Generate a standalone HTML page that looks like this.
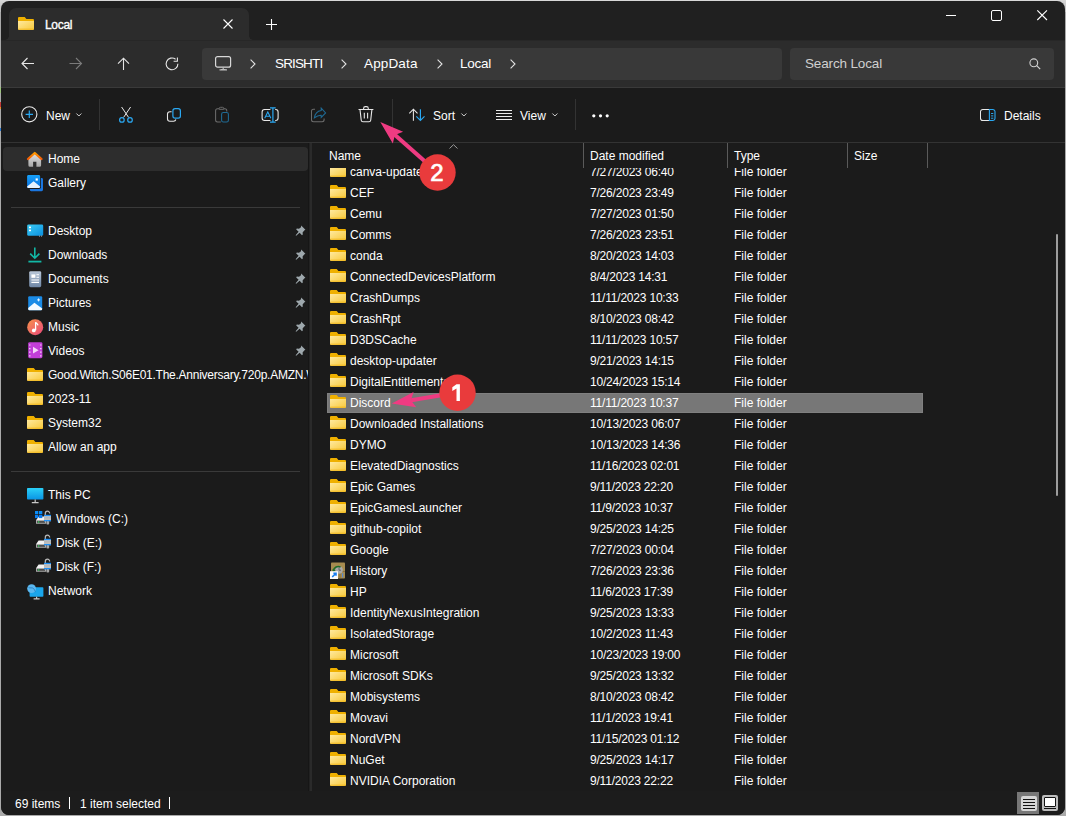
<!DOCTYPE html>
<html><head><meta charset="utf-8"><style>
*{box-sizing:border-box;margin:0;padding:0}
html,body{width:1066px;height:816px;overflow:hidden;font-family:"Liberation Sans",sans-serif;color:#fff;font-size:12px}
body{background:#aaaaaa;position:relative}
.a{position:absolute}
#win{position:absolute;left:1px;top:1px;width:1064px;height:814px;background:#202020;border-radius:8px;overflow:hidden}
#c{position:absolute;left:-1px;top:-1px;width:1066px;height:816px}
.t{position:absolute;white-space:nowrap;line-height:14px;height:14px}
svg{position:absolute;overflow:visible}
.row{position:absolute;left:0;height:21px;width:1000px}
.row .n{position:absolute;left:350px;top:3px;line-height:14px;white-space:nowrap}
.row .d{position:absolute;left:590px;top:3px;line-height:14px;white-space:nowrap;letter-spacing:-0.2px}
.row .y{position:absolute;left:734px;top:3px;line-height:14px;white-space:nowrap}
.row svg{left:330px;top:2px}
.si{position:absolute;left:0;height:24px;width:309px}
.si .t{left:48px;top:5px}
.si svg{left:27px;top:4px}
.pin{left:293px !important;top:6px !important}
</style></head><body>
<div style="position:absolute;left:0;top:0;width:1066px;height:1px;background:#d8d8d8"></div><div style="position:absolute;left:0;top:0;width:10px;height:12px;background:linear-gradient(#d8d8d8,#b8b8b8)"></div><div style="position:absolute;left:1056px;top:0;width:10px;height:12px;background:linear-gradient(#d8d8d8,#c0c0c0)"></div>
<div id="win"><div id="c">
<div class="a" style="left:9px;top:8px;width:240px;height:33px;background:#2c2c2c;border-radius:7px 7px 0 0"></div>
<div class="a" style="left:249px;top:36px;width:4px;height:4px;background:radial-gradient(circle at 100% 0,#202020 3.5px,#2c2c2c 4px)"></div>
<div class="a" style="left:5px;top:36px;width:4px;height:4px;background:radial-gradient(circle at 0 0,#202020 3.5px,#2c2c2c 4px)"></div>
<svg width="16" height="13" viewBox="0 0 16 13" style="left:18px;top:17px"><defs><linearGradient id="fg1" x1="0" y1="0" x2="1" y2="1"><stop offset="0" stop-color="#ffe99e"/><stop offset="1" stop-color="#f8c93a"/></linearGradient></defs><path d="M1.1 0h5.6l1.7 2h6.5a1.1 1.1 0 0 1 1.1 1.1V6H0V1.1A1.1 1.1 0 0 1 1.1 0z" fill="#efb000"/><path d="M0 4h16v7.8a1.2 1.2 0 0 1-1.2 1.2H1.2A1.2 1.2 0 0 1 0 11.8z" fill="url(#fg1)"/><path d="M0.4 12.2h15.2" stroke="#f1b41a" stroke-width="0.9"/></svg>
<div class="t" style="left:45px;top:18px;letter-spacing:-0.3px;-webkit-text-stroke:0.35px #fff">Local</div>
<svg width="10" height="10" style="left:223px;top:19px"><path d="M0.5 0.5L9.5 9.5M9.5 0.5L0.5 9.5" stroke="#fff" stroke-width="1.1"/></svg>
<svg width="12" height="12" style="left:266px;top:19px"><path d="M5.5 0V11M0 5.5H11" stroke="#fff" stroke-width="1.1"/></svg>
<svg width="11" height="2" style="left:946px;top:14px"><path d="M0 1.5H10" stroke="#fff" stroke-width="1"/></svg>
<svg width="11" height="11" style="left:991px;top:10px"><rect x="0.5" y="0.5" width="10" height="10" rx="1.5" fill="none" stroke="#fff" stroke-width="1"/></svg>
<svg width="11" height="11" style="left:1037px;top:10px"><path d="M0.3 0.3L10 10M10 0.3L0.3 10" stroke="#fff" stroke-width="1.1"/></svg>
<div class="a" style="left:0;top:40px;width:1066px;height:47px;background:#2c2c2c"></div>
<div class="a" style="left:0;top:87px;width:1066px;height:1px;background:#3a3a3a"></div>
<div class="a" style="left:0;top:40px;width:1066px;height:1px;background:#272727"></div>
<svg width="14" height="14" style="left:21px;top:57px"><path d="M1 6.5H13M6.5 1L1 6.5L6.5 12" fill="none" stroke="#e6e6e6" stroke-width="1.1"/></svg>
<svg width="14" height="14" style="left:69px;top:57px"><path d="M0.5 6.5H12.5M7 1L12.5 6.5L7 12" fill="none" stroke="#7a7a7a" stroke-width="1.1"/></svg>
<svg width="14" height="14" style="left:117px;top:57px"><path d="M6.5 13V1.2M1 6.7L6.5 1.2L12 6.7" fill="none" stroke="#e6e6e6" stroke-width="1.1"/></svg>
<svg width="14" height="14" style="left:165px;top:57px"><path d="M12.9 6.8A5.9 5.9 0 1 1 10.6 2.2" fill="none" stroke="#e6e6e6" stroke-width="1.1"/><path d="M12.4 0.6V4.3H8.6" fill="none" stroke="#e6e6e6" stroke-width="1.1"/></svg>
<div class="a" style="left:202px;top:48px;width:580px;height:32px;background:#393939;border-radius:4px"></div>
<svg width="17" height="15" style="left:215px;top:56px"><rect x="0.6" y="0.6" width="15" height="10.6" rx="2" fill="none" stroke="#d8d8d8" stroke-width="1.2"/><path d="M6 13.6H10.5M8.2 11.3V13.6M4.5 13.8H12" stroke="#bdbdbd" stroke-width="1.2"/></svg>
<svg width="6" height="10" style="left:250px;top:59px"><path d="M0.6 0.6L5 5L0.6 9.4" fill="none" stroke="#e0e0e0" stroke-width="1.1"/></svg>
<svg width="6" height="10" style="left:341px;top:59px"><path d="M0.6 0.6L5 5L0.6 9.4" fill="none" stroke="#e0e0e0" stroke-width="1.1"/></svg>
<svg width="6" height="10" style="left:437px;top:59px"><path d="M0.6 0.6L5 5L0.6 9.4" fill="none" stroke="#e0e0e0" stroke-width="1.1"/></svg>
<svg width="6" height="10" style="left:510px;top:59px"><path d="M0.6 0.6L5 5L0.6 9.4" fill="none" stroke="#e0e0e0" stroke-width="1.1"/></svg>
<div class="t" style="left:275px;top:56px;font-size:13.5px;line-height:15px;height:15px;letter-spacing:-0.85px">SRISHTI</div>
<div class="t" style="left:364px;top:56px;font-size:13.5px;line-height:15px;height:15px;letter-spacing:0.15px">AppData</div>
<div class="t" style="left:460px;top:56px;font-size:13.5px;line-height:15px;height:15px;letter-spacing:-0.25px">Local</div>
<div class="a" style="left:790px;top:48px;width:264px;height:32px;background:#393939;border-radius:4px"></div>
<div class="t" style="left:805px;top:56px;font-size:13.5px;line-height:15px;height:15px;letter-spacing:-0.15px;color:#d0d0d0">Search Local</div>
<svg width="12" height="12" style="left:1029px;top:58px"><circle cx="4.8" cy="4.8" r="3.9" fill="none" stroke="#d0d0d0" stroke-width="1.1"/><path d="M7.7 7.7L11.2 11.2" stroke="#d0d0d0" stroke-width="1.2"/></svg>
<div class="a" style="left:0;top:88px;width:1066px;height:54px;background:#1b1b1b"></div>
<div class="a" style="left:0;top:142px;width:1066px;height:1px;background:#333"></div>
<svg width="17" height="17" style="left:21px;top:106px"><circle cx="8.3" cy="8.3" r="7.6" fill="none" stroke="#e8e8e8" stroke-width="1.1"/><path d="M8.3 4.6V12M4.6 8.3H12" stroke="#2aa8f2" stroke-width="1.2"/></svg>
<div class="t" style="left:46px;top:109px">New</div>
<svg width="6" height="4" style="left:76px;top:113px"><path d="M0.4 0.5L2.9 3L5.4 0.5" fill="none" stroke="#cfcfcf" stroke-width="1"/></svg>
<div class="a" style="left:99px;top:99px;width:1px;height:31px;background:#333"></div>
<svg width="1066" height="200" style="left:0;top:0"><path d="M121.6 107L128.6 117.4M130.6 107L123.6 117.4" stroke="#e8e8e8" stroke-width="1" fill="none"/><circle cx="121.9" cy="119.9" r="2.3" fill="none" stroke="#2aa8f2" stroke-width="1.2"/><circle cx="130" cy="119.9" r="2.3" fill="none" stroke="#2aa8f2" stroke-width="1.2"/><path d="M171.6 111.7H169.9a2.4 2.4 0 0 0-2.4 2.4v4.7a2.4 2.4 0 0 0 2.4 2.4h3.7a2.4 2.4 0 0 0 2.3-1.7" fill="none" stroke="#e8e8e8" stroke-width="1.1"/><rect x="172.9" y="108.7" width="7.5" height="9.5" rx="2.2" fill="none" stroke="#2aa8f2" stroke-width="1.2"/><path d="M219 108.7H217.6a2 2 0 0 0-2 2V120a2 2 0 0 0 2 2h3.2M223.8 108.7h1a2 2 0 0 1 2 2v0.8" fill="none" stroke="#6c6c6c" stroke-width="1.05"/><path d="M219.2 109.3V108.6a1.3 1.3 0 0 1 1.3-1.3h2a1.3 1.3 0 0 1 1.3 1.3v0.7Z" fill="none" stroke="#6c6c6c" stroke-width="1"/><rect x="221.6" y="112.5" width="6.8" height="9.5" rx="1.8" fill="none" stroke="#1f6a94" stroke-width="1.1"/><path d="M270.4 109.5H264.6a2.5 2.5 0 0 0-2.5 2.5V118a2.5 2.5 0 0 0 2.5 2.5H270.4M275.2 109.5h0.4a2.5 2.5 0 0 1 2.5 2.5V118a2.5 2.5 0 0 1-2.5 2.5h-0.4" fill="none" stroke="#e8e8e8" stroke-width="1.1"/><path d="M272.9 107.3V122.7M270 107.8H275.7M270 122.2H275.7" fill="none" stroke="#2aa8f2" stroke-width="1.2"/><path d="M264.7 118.3L267.8 111.9L270.9 118.3M265.7 116.3H269.9" fill="none" stroke="#2aa8f2" stroke-width="1.05"/><path d="M315 109.3H313.5a2 2 0 0 0-2 2v8.5a2 2 0 0 0 2 2h8.6a2 2 0 0 0 2-2v-1.4" fill="none" stroke="#6c6c6c" stroke-width="1.05"/><path d="M321.2 108.2L325.6 112.9L321.2 117.4V115.2C318.4 115 316.4 116.2 314.4 117.8C315 113.6 317.6 111.2 321.2 110.6Z" fill="none" stroke="#1f6a94" stroke-width="1.05"/></svg>
<svg width="16" height="17" style="left:358px;top:106px"><path d="M0.5 3.5H15.4M5.6 3.4V2.4a1.8 1.8 0 0 1 1.8-1.8h1.1a1.8 1.8 0 0 1 1.8 1.8v1M2 3.6L3.2 14.2a1.8 1.8 0 0 0 1.8 1.6h5.9a1.8 1.8 0 0 0 1.8-1.6L13.9 3.6M6.3 6.8V12.4M9.6 6.8V12.4" fill="none" stroke="#e8e8e8" stroke-width="1.1"/></svg>
<div class="a" style="left:392px;top:99px;width:1px;height:31px;background:#333"></div>
<svg width="26" height="26" style="left:404px;top:102px"><path d="M9.4 7V18.8M5.3 11.4L9.4 7.2L13.5 11.4" fill="none" stroke="#e8e8e8" stroke-width="1.05"/><path d="M16.4 7.2V18.6M12.3 14.4L16.4 18.5L20.5 14.4" fill="none" stroke="#2aa8f2" stroke-width="1.15"/></svg>
<div class="t" style="left:433px;top:109px">Sort</div>
<svg width="6" height="4" style="left:461px;top:113px"><path d="M0.4 0.5L2.9 3L5.4 0.5" fill="none" stroke="#cfcfcf" stroke-width="1"/></svg>
<svg width="17" height="14" style="left:496px;top:108px"><path d="M0 2.5H16M0 5.5H16M0 8.5H16M0 11.5H16" stroke="#ececec" stroke-width="1"/></svg>
<div class="t" style="left:520px;top:109px">View</div>
<svg width="6" height="4" style="left:552px;top:113px"><path d="M0.4 0.5L2.9 3L5.4 0.5" fill="none" stroke="#cfcfcf" stroke-width="1"/></svg>
<div class="a" style="left:575px;top:99px;width:1px;height:31px;background:#333"></div>
<svg width="18" height="4" style="left:592px;top:114px"><circle cx="1.8" cy="1.8" r="1.6" fill="#fff"/><circle cx="8.5" cy="1.8" r="1.6" fill="#fff"/><circle cx="15.2" cy="1.8" r="1.6" fill="#fff"/></svg>
<svg width="17" height="13" style="left:980px;top:109px"><path d="M9.4 0.5H2.8a2.3 2.3 0 0 0-2.3 2.3V9.2a2.3 2.3 0 0 0 2.3 2.3H9.4" fill="none" stroke="#e8e8e8" stroke-width="1.05"/><path d="M9.4 0.5h3.3a2.3 2.3 0 0 1 2.3 2.3V9.2a2.3 2.3 0 0 1-2.3 2.3H9.4z" fill="none" stroke="#2aa8f2" stroke-width="1.1"/><path d="M11.1 4.5H13.3M11.1 6.9H13.3M11.1 9.2H13.3" stroke="#2aa8f2" stroke-width="1"/></svg>
<div class="t" style="left:1004px;top:109px">Details</div>
<div class="a" style="left:0;top:143px;width:1066px;height:648px;background:#1b1b1b"></div>
<div class="a" style="left:3px;top:147px;width:305px;height:24px;background:#2d2d2d;border-radius:4px"></div>
<div class="a" style="left:308px;top:143px;width:1px;height:648px;background:#161616"></div>
<div class="a" style="left:309px;top:143px;width:1px;height:648px;background:#222"></div><div class="a" style="left:310px;top:143px;width:2px;height:648px;background:#2a2a2a"></div>
<div class="a" style="left:11px;top:207px;width:289px;height:1px;background:#3a3a3a"></div>
<div class="a" style="left:11px;top:471px;width:289px;height:1px;background:#3a3a3a"></div>
<svg width="17" height="17" style="left:27px;top:151px"><defs><linearGradient id="hg" x1="0" y1="0" x2="0" y2="1"><stop offset="0" stop-color="#e2e2e2"/><stop offset="1" stop-color="#a6a6a6"/></linearGradient><linearGradient id="rg" x1="0" y1="0" x2="0" y2="1"><stop offset="0" stop-color="#ff9a00"/><stop offset="1" stop-color="#f25a06"/></linearGradient></defs><path d="M1.4 7.6L7.75 2.2L14.1 7.6V14.3a1.5 1.5 0 0 1-1.5 1.5H9.4V10.8H6.1V15.8H2.9a1.5 1.5 0 0 1-1.5-1.5Z" fill="url(#hg)"/><path d="M1 8L7.75 2L14.5 8" fill="none" stroke="url(#rg)" stroke-width="2.3" stroke-linecap="round" stroke-linejoin="round"/></svg>
<div class="t" style="left:48px;top:152px">Home</div>
<svg width="17" height="17" style="left:27px;top:175px"><defs><linearGradient id="gg" x1="0" y1="0" x2="0" y2="1"><stop offset="0" stop-color="#16a0f8"/><stop offset="1" stop-color="#0a70e2"/></linearGradient></defs><rect x="2.8" y="3" width="13.2" height="13.2" rx="1.4" fill="#1a76e0"/><rect x="-0.5" y="-0.3" width="14.4" height="14.4" rx="1.8" fill="#1b1b1b"/><rect x="0.1" y="0.1" width="13" height="13" rx="1.4" fill="url(#gg)"/><path d="M0.1 11.4L6.6 6.2L13.1 11.6V11.7a1.4 1.4 0 0 1-1.4 1.4H1.5A1.4 1.4 0 0 1 0.1 11.7Z" fill="#e4f2ff"/><rect x="8.6" y="3.4" width="2.2" height="2.2" fill="#fff"/></svg>
<div class="t" style="left:48px;top:176px">Gallery</div>
<svg width="17" height="13" style="left:27px;top:224px"><defs><linearGradient id="dg" x1="0" y1="0" x2="1" y2="1"><stop offset="0" stop-color="#3ccdf5"/><stop offset="1" stop-color="#0a8fe0"/></linearGradient></defs><rect x="0.2" y="0.4" width="16" height="11.4" rx="1.4" fill="url(#dg)"/><rect x="2" y="2.6" width="2" height="1.6" fill="#fff"/><rect x="2" y="5.6" width="2" height="1.6" fill="#fff"/><rect x="12" y="11.6" width="1" height="1" fill="#aaa"/><rect x="14" y="11.6" width="1" height="1" fill="#aaa"/></svg>
<div class="t" style="left:48px;top:224px">Desktop</div>
<svg width="11" height="11" style="left:294.5px;top:225px"><path d="M6.2 0.6L10.4 4.8L9.2 5.4L7.6 7.4L7.8 9.6L7 10.2L4.6 7.8L1.2 10.8L0.6 10.2L3.6 6.8L1.2 4.4L1.8 3.6L4 3.8L6 2.2Z" fill="#9ea8ad"/></svg>
<svg width="14" height="16" style="left:28px;top:247px"><path d="M6.8 0.6V11M2.2 6.6L6.8 11.2L11.4 6.6" fill="none" stroke="#12b7a5" stroke-width="1.6"/><path d="M0.4 14.6H13.4" stroke="#12b7a5" stroke-width="1.8"/></svg>
<div class="t" style="left:48px;top:248px">Downloads</div>
<svg width="11" height="11" style="left:294.5px;top:249px"><path d="M6.2 0.6L10.4 4.8L9.2 5.4L7.6 7.4L7.8 9.6L7 10.2L4.6 7.8L1.2 10.8L0.6 10.2L3.6 6.8L1.2 4.4L1.8 3.6L4 3.8L6 2.2Z" fill="#9ea8ad"/></svg>
<svg width="13" height="17" style="left:29px;top:271px"><defs><linearGradient id="docg" x1="0" y1="0" x2="0" y2="1"><stop offset="0" stop-color="#b9c7d8"/><stop offset="1" stop-color="#6f87a6"/></linearGradient></defs><rect x="0.2" y="0.2" width="12" height="16" rx="1.4" fill="url(#docg)"/><rect x="2.4" y="3.4" width="4" height="3.4" fill="#fff"/><path d="M7.4 3.8H10M7.4 6.2H10M2.4 9H10M2.4 11.4H10" stroke="#fff" stroke-width="1.1"/></svg>
<div class="t" style="left:48px;top:272px">Documents</div>
<svg width="11" height="11" style="left:294.5px;top:273px"><path d="M6.2 0.6L10.4 4.8L9.2 5.4L7.6 7.4L7.8 9.6L7 10.2L4.6 7.8L1.2 10.8L0.6 10.2L3.6 6.8L1.2 4.4L1.8 3.6L4 3.8L6 2.2Z" fill="#9ea8ad"/></svg>
<svg width="15" height="15" style="left:28px;top:296px"><rect x="0.2" y="0.2" width="14" height="14" rx="1.2" fill="#1b8be6"/><path d="M0.2 12L6.4 6.8L14.2 12.4V13a1.2 1.2 0 0 1-1.2 1.2H1.4A1.2 1.2 0 0 1 0.2 13Z" fill="#f4faff"/><path d="M10.6 2.4V5.4M9.1 3.9H12.1" stroke="#fff" stroke-width="0.9"/></svg>
<div class="t" style="left:48px;top:296px">Pictures</div>
<svg width="11" height="11" style="left:294.5px;top:297px"><path d="M6.2 0.6L10.4 4.8L9.2 5.4L7.6 7.4L7.8 9.6L7 10.2L4.6 7.8L1.2 10.8L0.6 10.2L3.6 6.8L1.2 4.4L1.8 3.6L4 3.8L6 2.2Z" fill="#9ea8ad"/></svg>
<svg width="17" height="17" style="left:27px;top:319px"><defs><linearGradient id="mg" x1="0" y1="0" x2="1" y2="1"><stop offset="0" stop-color="#f7934a"/><stop offset="1" stop-color="#e8477a"/></linearGradient></defs><circle cx="8.2" cy="8.2" r="8" fill="url(#mg)"/><path d="M8.6 3.2V11.2" stroke="#fff" stroke-width="1.3"/><circle cx="6.8" cy="11.4" r="1.9" fill="#fff"/><path d="M8.6 3.2C9.4 4.6 10.8 4.8 11 6.4" fill="none" stroke="#fff" stroke-width="1.2"/></svg>
<div class="t" style="left:48px;top:320px">Music</div>
<svg width="11" height="11" style="left:294.5px;top:321px"><path d="M6.2 0.6L10.4 4.8L9.2 5.4L7.6 7.4L7.8 9.6L7 10.2L4.6 7.8L1.2 10.8L0.6 10.2L3.6 6.8L1.2 4.4L1.8 3.6L4 3.8L6 2.2Z" fill="#9ea8ad"/></svg>
<svg width="15" height="17" style="left:28px;top:342px"><rect x="0.2" y="0.2" width="14.2" height="16" rx="1.4" fill="#c23ed8"/><path d="M5 4.8L10.6 8.2L5 11.6Z" fill="#f3d6f8"/><path d="M1.8 2.4v1.2M1.8 6v1.2M1.8 9.6v1.2M1.8 13.2v1.2M12.8 2.4v1.2M12.8 6v1.2M12.8 9.6v1.2M12.8 13.2v1.2" stroke="#f3d6f8" stroke-width="1.4"/></svg>
<div class="t" style="left:48px;top:344px">Videos</div>
<svg width="11" height="11" style="left:294.5px;top:345px"><path d="M6.2 0.6L10.4 4.8L9.2 5.4L7.6 7.4L7.8 9.6L7 10.2L4.6 7.8L1.2 10.8L0.6 10.2L3.6 6.8L1.2 4.4L1.8 3.6L4 3.8L6 2.2Z" fill="#9ea8ad"/></svg>
<svg width="16" height="13" viewBox="0 0 16 13" style="left:27px;top:368px"><defs><linearGradient id="fg2" x1="0" y1="0" x2="1" y2="1"><stop offset="0" stop-color="#ffe99e"/><stop offset="1" stop-color="#f8c93a"/></linearGradient></defs><path d="M1.1 0h5.6l1.7 2h6.5a1.1 1.1 0 0 1 1.1 1.1V6H0V1.1A1.1 1.1 0 0 1 1.1 0z" fill="#efb000"/><path d="M0 4h16v7.8a1.2 1.2 0 0 1-1.2 1.2H1.2A1.2 1.2 0 0 1 0 11.8z" fill="url(#fg2)"/><path d="M0.4 12.2h15.2" stroke="#f1b41a" stroke-width="0.9"/></svg>
<div class="t" style="left:48px;top:368px;width:260px;overflow:hidden;letter-spacing:-0.25px">Good.Witch.S06E01.The.Anniversary.720p.AMZN.WEB</div>
<svg width="16" height="13" viewBox="0 0 16 13" style="left:27px;top:392px"><defs><linearGradient id="fg3" x1="0" y1="0" x2="1" y2="1"><stop offset="0" stop-color="#ffe99e"/><stop offset="1" stop-color="#f8c93a"/></linearGradient></defs><path d="M1.1 0h5.6l1.7 2h6.5a1.1 1.1 0 0 1 1.1 1.1V6H0V1.1A1.1 1.1 0 0 1 1.1 0z" fill="#efb000"/><path d="M0 4h16v7.8a1.2 1.2 0 0 1-1.2 1.2H1.2A1.2 1.2 0 0 1 0 11.8z" fill="url(#fg3)"/><path d="M0.4 12.2h15.2" stroke="#f1b41a" stroke-width="0.9"/></svg>
<div class="t" style="left:48px;top:392px;width:260px;overflow:hidden;letter-spacing:0">2023-11</div>
<svg width="16" height="13" viewBox="0 0 16 13" style="left:27px;top:416px"><defs><linearGradient id="fg4" x1="0" y1="0" x2="1" y2="1"><stop offset="0" stop-color="#ffe99e"/><stop offset="1" stop-color="#f8c93a"/></linearGradient></defs><path d="M1.1 0h5.6l1.7 2h6.5a1.1 1.1 0 0 1 1.1 1.1V6H0V1.1A1.1 1.1 0 0 1 1.1 0z" fill="#efb000"/><path d="M0 4h16v7.8a1.2 1.2 0 0 1-1.2 1.2H1.2A1.2 1.2 0 0 1 0 11.8z" fill="url(#fg4)"/><path d="M0.4 12.2h15.2" stroke="#f1b41a" stroke-width="0.9"/></svg>
<div class="t" style="left:48px;top:416px;width:260px;overflow:hidden;letter-spacing:0">System32</div>
<svg width="16" height="13" viewBox="0 0 16 13" style="left:27px;top:440px"><defs><linearGradient id="fg5" x1="0" y1="0" x2="1" y2="1"><stop offset="0" stop-color="#ffe99e"/><stop offset="1" stop-color="#f8c93a"/></linearGradient></defs><path d="M1.1 0h5.6l1.7 2h6.5a1.1 1.1 0 0 1 1.1 1.1V6H0V1.1A1.1 1.1 0 0 1 1.1 0z" fill="#efb000"/><path d="M0 4h16v7.8a1.2 1.2 0 0 1-1.2 1.2H1.2A1.2 1.2 0 0 1 0 11.8z" fill="url(#fg5)"/><path d="M0.4 12.2h15.2" stroke="#f1b41a" stroke-width="0.9"/></svg>
<div class="t" style="left:48px;top:440px;width:260px;overflow:hidden;letter-spacing:0">Allow an app</div>
<svg width="17" height="16" style="left:27px;top:488px"><defs><linearGradient id="pcg" x1="0" y1="0" x2="0" y2="1"><stop offset="0" stop-color="#2ad0f8"/><stop offset="1" stop-color="#0a94e4"/></linearGradient></defs><rect x="0" y="0" width="16.4" height="11.6" rx="0.8" fill="url(#pcg)"/><path d="M8.2 11.6V14.2M4.8 14.6H11.6" stroke="#c8c8c8" stroke-width="1.2"/></svg>
<div class="t" style="left:48px;top:488px">This PC</div>
<svg width="17" height="16" style="left:35px;top:510px"><path d="M1 10.2L3.6 6.6H11V10.2Z" fill="#f2f2f2"/><rect x="1" y="10.2" width="10" height="3.4" fill="#cfcfcf"/><rect x="1.7" y="10.9" width="8.6" height="2" fill="#4e4e4e"/><circle cx="3.6" cy="11.9" r="0.75" fill="#2ee05a"/><rect x="11.4" y="11" width="2.8" height="3.6" rx="1" fill="#a8a8a8"/><path d="M10.3 5V3.4a2.2 2.2 0 0 1 4.4 0" fill="none" stroke="#b9b9b9" stroke-width="1.2"/><rect x="9" y="5" width="7" height="6.2" fill="#c6c6c6"/><path d="M9 7.3H16M9 8.9H16" stroke="#a9a9a9" stroke-width="0.6"/><rect x="9" y="4.8" width="7" height="1.3" fill="#1e8ff5"/><rect x="9" y="10" width="7" height="1.3" fill="#1e8ff5"/></svg>
<svg width="8" height="8" style="left:35px;top:511px"><rect x="0" y="0" width="3.3" height="3.2" fill="#0a8cf5"/><rect x="4" y="0" width="3.3" height="3.2" fill="#0a8cf5"/><rect x="0" y="3.9" width="3.3" height="3.2" fill="#0a7cf0"/><rect x="4" y="3.9" width="3.3" height="3.2" fill="#0a7cf0"/></svg>
<div class="t" style="left:56px;top:512px">Windows (C:)</div>
<svg width="17" height="16" style="left:35px;top:534px"><path d="M1 10.2L3.6 6.6H11V10.2Z" fill="#f2f2f2"/><rect x="1" y="10.2" width="10" height="3.4" fill="#cfcfcf"/><rect x="1.7" y="10.9" width="8.6" height="2" fill="#4e4e4e"/><circle cx="3.6" cy="11.9" r="0.75" fill="#2ee05a"/><rect x="11.4" y="11" width="2.8" height="3.6" rx="1" fill="#a8a8a8"/><path d="M10.3 5V3.4a2.2 2.2 0 0 1 4.4 0" fill="none" stroke="#b9b9b9" stroke-width="1.2"/><rect x="9" y="5" width="7" height="6.2" fill="#c6c6c6"/><path d="M9 7.3H16M9 8.9H16" stroke="#a9a9a9" stroke-width="0.6"/><rect x="9" y="4.8" width="7" height="1.3" fill="#1e8ff5"/><rect x="9" y="10" width="7" height="1.3" fill="#1e8ff5"/></svg>
<div class="t" style="left:56px;top:536px">Disk (E:)</div>
<svg width="17" height="16" style="left:35px;top:558px"><path d="M1 10.2L3.6 6.6H11V10.2Z" fill="#f2f2f2"/><rect x="1" y="10.2" width="10" height="3.4" fill="#cfcfcf"/><rect x="1.7" y="10.9" width="8.6" height="2" fill="#4e4e4e"/><circle cx="3.6" cy="11.9" r="0.75" fill="#2ee05a"/><rect x="11.4" y="11" width="2.8" height="3.6" rx="1" fill="#a8a8a8"/><path d="M10.3 5V3.4a2.2 2.2 0 0 1 4.4 0" fill="none" stroke="#b9b9b9" stroke-width="1.2"/><rect x="9" y="5" width="7" height="6.2" fill="#c6c6c6"/><path d="M9 7.3H16M9 8.9H16" stroke="#a9a9a9" stroke-width="0.6"/><rect x="9" y="4.8" width="7" height="1.3" fill="#1e8ff5"/><rect x="9" y="10" width="7" height="1.3" fill="#1e8ff5"/></svg>
<div class="t" style="left:56px;top:560px">Disk (F:)</div>
<svg width="17" height="16" style="left:27px;top:584px"><rect x="2.6" y="3.2" width="13.8" height="9.6" rx="0.8" fill="#1aa6ec"/><path d="M9.6 12.8V14.4M6.6 14.8H12.6" stroke="#c8c8c8" stroke-width="1.2"/><circle cx="4.6" cy="4.6" r="4.4" fill="#5bb8f0"/><path d="M1.6 3.4C3 4.6 5 3 6.6 4.6S7.6 7.6 8.6 7.8" fill="none" stroke="#2a7fc4" stroke-width="0.9"/></svg>
<div class="t" style="left:48px;top:584px">Network</div>
<div class="a" style="left:312px;top:143px;width:754px;height:648px;overflow:hidden">
<div class="a" style="left:-312px;top:-143px;width:1066px;height:816px">
<div class="row" style="top:162px"><svg width="16" height="13" viewBox="0 0 16 13" style=""><defs><linearGradient id="fg6" x1="0" y1="0" x2="1" y2="1"><stop offset="0" stop-color="#ffe99e"/><stop offset="1" stop-color="#f8c93a"/></linearGradient></defs><path d="M1.1 0h5.6l1.7 2h6.5a1.1 1.1 0 0 1 1.1 1.1V6H0V1.1A1.1 1.1 0 0 1 1.1 0z" fill="#efb000"/><path d="M0 4h16v7.8a1.2 1.2 0 0 1-1.2 1.2H1.2A1.2 1.2 0 0 1 0 11.8z" fill="url(#fg6)"/><path d="M0.4 12.2h15.2" stroke="#f1b41a" stroke-width="0.9"/></svg><div class="n">canva-updater</div><div class="d">7/27/2023 06:40</div><div class="y">File folder</div></div>
<div class="row" style="top:183px"><svg width="16" height="13" viewBox="0 0 16 13" style=""><defs><linearGradient id="fg7" x1="0" y1="0" x2="1" y2="1"><stop offset="0" stop-color="#ffe99e"/><stop offset="1" stop-color="#f8c93a"/></linearGradient></defs><path d="M1.1 0h5.6l1.7 2h6.5a1.1 1.1 0 0 1 1.1 1.1V6H0V1.1A1.1 1.1 0 0 1 1.1 0z" fill="#efb000"/><path d="M0 4h16v7.8a1.2 1.2 0 0 1-1.2 1.2H1.2A1.2 1.2 0 0 1 0 11.8z" fill="url(#fg7)"/><path d="M0.4 12.2h15.2" stroke="#f1b41a" stroke-width="0.9"/></svg><div class="n">CEF</div><div class="d">7/26/2023 23:49</div><div class="y">File folder</div></div>
<div class="row" style="top:204px"><svg width="16" height="13" viewBox="0 0 16 13" style=""><defs><linearGradient id="fg8" x1="0" y1="0" x2="1" y2="1"><stop offset="0" stop-color="#ffe99e"/><stop offset="1" stop-color="#f8c93a"/></linearGradient></defs><path d="M1.1 0h5.6l1.7 2h6.5a1.1 1.1 0 0 1 1.1 1.1V6H0V1.1A1.1 1.1 0 0 1 1.1 0z" fill="#efb000"/><path d="M0 4h16v7.8a1.2 1.2 0 0 1-1.2 1.2H1.2A1.2 1.2 0 0 1 0 11.8z" fill="url(#fg8)"/><path d="M0.4 12.2h15.2" stroke="#f1b41a" stroke-width="0.9"/></svg><div class="n">Cemu</div><div class="d">7/27/2023 01:50</div><div class="y">File folder</div></div>
<div class="row" style="top:225px"><svg width="16" height="13" viewBox="0 0 16 13" style=""><defs><linearGradient id="fg9" x1="0" y1="0" x2="1" y2="1"><stop offset="0" stop-color="#ffe99e"/><stop offset="1" stop-color="#f8c93a"/></linearGradient></defs><path d="M1.1 0h5.6l1.7 2h6.5a1.1 1.1 0 0 1 1.1 1.1V6H0V1.1A1.1 1.1 0 0 1 1.1 0z" fill="#efb000"/><path d="M0 4h16v7.8a1.2 1.2 0 0 1-1.2 1.2H1.2A1.2 1.2 0 0 1 0 11.8z" fill="url(#fg9)"/><path d="M0.4 12.2h15.2" stroke="#f1b41a" stroke-width="0.9"/></svg><div class="n">Comms</div><div class="d">7/26/2023 23:51</div><div class="y">File folder</div></div>
<div class="row" style="top:246px"><svg width="16" height="13" viewBox="0 0 16 13" style=""><defs><linearGradient id="fg10" x1="0" y1="0" x2="1" y2="1"><stop offset="0" stop-color="#ffe99e"/><stop offset="1" stop-color="#f8c93a"/></linearGradient></defs><path d="M1.1 0h5.6l1.7 2h6.5a1.1 1.1 0 0 1 1.1 1.1V6H0V1.1A1.1 1.1 0 0 1 1.1 0z" fill="#efb000"/><path d="M0 4h16v7.8a1.2 1.2 0 0 1-1.2 1.2H1.2A1.2 1.2 0 0 1 0 11.8z" fill="url(#fg10)"/><path d="M0.4 12.2h15.2" stroke="#f1b41a" stroke-width="0.9"/></svg><div class="n">conda</div><div class="d">8/20/2023 14:03</div><div class="y">File folder</div></div>
<div class="row" style="top:267px"><svg width="16" height="13" viewBox="0 0 16 13" style=""><defs><linearGradient id="fg11" x1="0" y1="0" x2="1" y2="1"><stop offset="0" stop-color="#ffe99e"/><stop offset="1" stop-color="#f8c93a"/></linearGradient></defs><path d="M1.1 0h5.6l1.7 2h6.5a1.1 1.1 0 0 1 1.1 1.1V6H0V1.1A1.1 1.1 0 0 1 1.1 0z" fill="#efb000"/><path d="M0 4h16v7.8a1.2 1.2 0 0 1-1.2 1.2H1.2A1.2 1.2 0 0 1 0 11.8z" fill="url(#fg11)"/><path d="M0.4 12.2h15.2" stroke="#f1b41a" stroke-width="0.9"/></svg><div class="n">ConnectedDevicesPlatform</div><div class="d">8/4/2023 14:31</div><div class="y">File folder</div></div>
<div class="row" style="top:288px"><svg width="16" height="13" viewBox="0 0 16 13" style=""><defs><linearGradient id="fg12" x1="0" y1="0" x2="1" y2="1"><stop offset="0" stop-color="#ffe99e"/><stop offset="1" stop-color="#f8c93a"/></linearGradient></defs><path d="M1.1 0h5.6l1.7 2h6.5a1.1 1.1 0 0 1 1.1 1.1V6H0V1.1A1.1 1.1 0 0 1 1.1 0z" fill="#efb000"/><path d="M0 4h16v7.8a1.2 1.2 0 0 1-1.2 1.2H1.2A1.2 1.2 0 0 1 0 11.8z" fill="url(#fg12)"/><path d="M0.4 12.2h15.2" stroke="#f1b41a" stroke-width="0.9"/></svg><div class="n">CrashDumps</div><div class="d">11/11/2023 10:33</div><div class="y">File folder</div></div>
<div class="row" style="top:309px"><svg width="16" height="13" viewBox="0 0 16 13" style=""><defs><linearGradient id="fg13" x1="0" y1="0" x2="1" y2="1"><stop offset="0" stop-color="#ffe99e"/><stop offset="1" stop-color="#f8c93a"/></linearGradient></defs><path d="M1.1 0h5.6l1.7 2h6.5a1.1 1.1 0 0 1 1.1 1.1V6H0V1.1A1.1 1.1 0 0 1 1.1 0z" fill="#efb000"/><path d="M0 4h16v7.8a1.2 1.2 0 0 1-1.2 1.2H1.2A1.2 1.2 0 0 1 0 11.8z" fill="url(#fg13)"/><path d="M0.4 12.2h15.2" stroke="#f1b41a" stroke-width="0.9"/></svg><div class="n">CrashRpt</div><div class="d">8/10/2023 08:42</div><div class="y">File folder</div></div>
<div class="row" style="top:330px"><svg width="16" height="13" viewBox="0 0 16 13" style=""><defs><linearGradient id="fg14" x1="0" y1="0" x2="1" y2="1"><stop offset="0" stop-color="#ffe99e"/><stop offset="1" stop-color="#f8c93a"/></linearGradient></defs><path d="M1.1 0h5.6l1.7 2h6.5a1.1 1.1 0 0 1 1.1 1.1V6H0V1.1A1.1 1.1 0 0 1 1.1 0z" fill="#efb000"/><path d="M0 4h16v7.8a1.2 1.2 0 0 1-1.2 1.2H1.2A1.2 1.2 0 0 1 0 11.8z" fill="url(#fg14)"/><path d="M0.4 12.2h15.2" stroke="#f1b41a" stroke-width="0.9"/></svg><div class="n">D3DSCache</div><div class="d">11/11/2023 10:57</div><div class="y">File folder</div></div>
<div class="row" style="top:351px"><svg width="16" height="13" viewBox="0 0 16 13" style=""><defs><linearGradient id="fg15" x1="0" y1="0" x2="1" y2="1"><stop offset="0" stop-color="#ffe99e"/><stop offset="1" stop-color="#f8c93a"/></linearGradient></defs><path d="M1.1 0h5.6l1.7 2h6.5a1.1 1.1 0 0 1 1.1 1.1V6H0V1.1A1.1 1.1 0 0 1 1.1 0z" fill="#efb000"/><path d="M0 4h16v7.8a1.2 1.2 0 0 1-1.2 1.2H1.2A1.2 1.2 0 0 1 0 11.8z" fill="url(#fg15)"/><path d="M0.4 12.2h15.2" stroke="#f1b41a" stroke-width="0.9"/></svg><div class="n">desktop-updater</div><div class="d">9/21/2023 14:15</div><div class="y">File folder</div></div>
<div class="row" style="top:372px"><svg width="16" height="13" viewBox="0 0 16 13" style=""><defs><linearGradient id="fg16" x1="0" y1="0" x2="1" y2="1"><stop offset="0" stop-color="#ffe99e"/><stop offset="1" stop-color="#f8c93a"/></linearGradient></defs><path d="M1.1 0h5.6l1.7 2h6.5a1.1 1.1 0 0 1 1.1 1.1V6H0V1.1A1.1 1.1 0 0 1 1.1 0z" fill="#efb000"/><path d="M0 4h16v7.8a1.2 1.2 0 0 1-1.2 1.2H1.2A1.2 1.2 0 0 1 0 11.8z" fill="url(#fg16)"/><path d="M0.4 12.2h15.2" stroke="#f1b41a" stroke-width="0.9"/></svg><div class="n">DigitalEntitlements</div><div class="d">10/24/2023 15:14</div><div class="y">File folder</div></div>
<div class="a" style="left:327px;top:393px;width:596px;height:20px;background:#777;border:1px solid #808080"></div>
<div class="row" style="top:393px"><svg width="16" height="13" viewBox="0 0 16 13" style=""><defs><linearGradient id="fg17" x1="0" y1="0" x2="1" y2="1"><stop offset="0" stop-color="#ffe99e"/><stop offset="1" stop-color="#f8c93a"/></linearGradient></defs><path d="M1.1 0h5.6l1.7 2h6.5a1.1 1.1 0 0 1 1.1 1.1V6H0V1.1A1.1 1.1 0 0 1 1.1 0z" fill="#efb000"/><path d="M0 4h16v7.8a1.2 1.2 0 0 1-1.2 1.2H1.2A1.2 1.2 0 0 1 0 11.8z" fill="url(#fg17)"/><path d="M0.4 12.2h15.2" stroke="#f1b41a" stroke-width="0.9"/></svg><div class="n">Discord</div><div class="d">11/11/2023 10:37</div><div class="y">File folder</div></div>
<div class="row" style="top:414px"><svg width="16" height="13" viewBox="0 0 16 13" style=""><defs><linearGradient id="fg18" x1="0" y1="0" x2="1" y2="1"><stop offset="0" stop-color="#ffe99e"/><stop offset="1" stop-color="#f8c93a"/></linearGradient></defs><path d="M1.1 0h5.6l1.7 2h6.5a1.1 1.1 0 0 1 1.1 1.1V6H0V1.1A1.1 1.1 0 0 1 1.1 0z" fill="#efb000"/><path d="M0 4h16v7.8a1.2 1.2 0 0 1-1.2 1.2H1.2A1.2 1.2 0 0 1 0 11.8z" fill="url(#fg18)"/><path d="M0.4 12.2h15.2" stroke="#f1b41a" stroke-width="0.9"/></svg><div class="n">Downloaded Installations</div><div class="d">10/13/2023 06:07</div><div class="y">File folder</div></div>
<div class="row" style="top:435px"><svg width="16" height="13" viewBox="0 0 16 13" style=""><defs><linearGradient id="fg19" x1="0" y1="0" x2="1" y2="1"><stop offset="0" stop-color="#ffe99e"/><stop offset="1" stop-color="#f8c93a"/></linearGradient></defs><path d="M1.1 0h5.6l1.7 2h6.5a1.1 1.1 0 0 1 1.1 1.1V6H0V1.1A1.1 1.1 0 0 1 1.1 0z" fill="#efb000"/><path d="M0 4h16v7.8a1.2 1.2 0 0 1-1.2 1.2H1.2A1.2 1.2 0 0 1 0 11.8z" fill="url(#fg19)"/><path d="M0.4 12.2h15.2" stroke="#f1b41a" stroke-width="0.9"/></svg><div class="n">DYMO</div><div class="d">10/13/2023 14:36</div><div class="y">File folder</div></div>
<div class="row" style="top:456px"><svg width="16" height="13" viewBox="0 0 16 13" style=""><defs><linearGradient id="fg20" x1="0" y1="0" x2="1" y2="1"><stop offset="0" stop-color="#ffe99e"/><stop offset="1" stop-color="#f8c93a"/></linearGradient></defs><path d="M1.1 0h5.6l1.7 2h6.5a1.1 1.1 0 0 1 1.1 1.1V6H0V1.1A1.1 1.1 0 0 1 1.1 0z" fill="#efb000"/><path d="M0 4h16v7.8a1.2 1.2 0 0 1-1.2 1.2H1.2A1.2 1.2 0 0 1 0 11.8z" fill="url(#fg20)"/><path d="M0.4 12.2h15.2" stroke="#f1b41a" stroke-width="0.9"/></svg><div class="n">ElevatedDiagnostics</div><div class="d">11/16/2023 02:01</div><div class="y">File folder</div></div>
<div class="row" style="top:477px"><svg width="16" height="13" viewBox="0 0 16 13" style=""><defs><linearGradient id="fg21" x1="0" y1="0" x2="1" y2="1"><stop offset="0" stop-color="#ffe99e"/><stop offset="1" stop-color="#f8c93a"/></linearGradient></defs><path d="M1.1 0h5.6l1.7 2h6.5a1.1 1.1 0 0 1 1.1 1.1V6H0V1.1A1.1 1.1 0 0 1 1.1 0z" fill="#efb000"/><path d="M0 4h16v7.8a1.2 1.2 0 0 1-1.2 1.2H1.2A1.2 1.2 0 0 1 0 11.8z" fill="url(#fg21)"/><path d="M0.4 12.2h15.2" stroke="#f1b41a" stroke-width="0.9"/></svg><div class="n">Epic Games</div><div class="d">9/11/2023 22:20</div><div class="y">File folder</div></div>
<div class="row" style="top:498px"><svg width="16" height="13" viewBox="0 0 16 13" style=""><defs><linearGradient id="fg22" x1="0" y1="0" x2="1" y2="1"><stop offset="0" stop-color="#ffe99e"/><stop offset="1" stop-color="#f8c93a"/></linearGradient></defs><path d="M1.1 0h5.6l1.7 2h6.5a1.1 1.1 0 0 1 1.1 1.1V6H0V1.1A1.1 1.1 0 0 1 1.1 0z" fill="#efb000"/><path d="M0 4h16v7.8a1.2 1.2 0 0 1-1.2 1.2H1.2A1.2 1.2 0 0 1 0 11.8z" fill="url(#fg22)"/><path d="M0.4 12.2h15.2" stroke="#f1b41a" stroke-width="0.9"/></svg><div class="n">EpicGamesLauncher</div><div class="d">11/9/2023 10:37</div><div class="y">File folder</div></div>
<div class="row" style="top:519px"><svg width="16" height="13" viewBox="0 0 16 13" style=""><defs><linearGradient id="fg23" x1="0" y1="0" x2="1" y2="1"><stop offset="0" stop-color="#ffe99e"/><stop offset="1" stop-color="#f8c93a"/></linearGradient></defs><path d="M1.1 0h5.6l1.7 2h6.5a1.1 1.1 0 0 1 1.1 1.1V6H0V1.1A1.1 1.1 0 0 1 1.1 0z" fill="#efb000"/><path d="M0 4h16v7.8a1.2 1.2 0 0 1-1.2 1.2H1.2A1.2 1.2 0 0 1 0 11.8z" fill="url(#fg23)"/><path d="M0.4 12.2h15.2" stroke="#f1b41a" stroke-width="0.9"/></svg><div class="n">github-copilot</div><div class="d">9/25/2023 14:25</div><div class="y">File folder</div></div>
<div class="row" style="top:540px"><svg width="16" height="13" viewBox="0 0 16 13" style=""><defs><linearGradient id="fg24" x1="0" y1="0" x2="1" y2="1"><stop offset="0" stop-color="#ffe99e"/><stop offset="1" stop-color="#f8c93a"/></linearGradient></defs><path d="M1.1 0h5.6l1.7 2h6.5a1.1 1.1 0 0 1 1.1 1.1V6H0V1.1A1.1 1.1 0 0 1 1.1 0z" fill="#efb000"/><path d="M0 4h16v7.8a1.2 1.2 0 0 1-1.2 1.2H1.2A1.2 1.2 0 0 1 0 11.8z" fill="url(#fg24)"/><path d="M0.4 12.2h15.2" stroke="#f1b41a" stroke-width="0.9"/></svg><div class="n">Google</div><div class="d">7/27/2023 00:04</div><div class="y">File folder</div></div>
<div class="row" style="top:561px"><svg width="16" height="17" style="top:1px"><rect x="1" y="0.5" width="14" height="16" rx="0.8" fill="#a68b4f"/><path d="M10 9.5H15M10 9.5V16.5" stroke="#7d6638" stroke-width="0.8"/><rect x="12" y="11" width="1.2" height="4.5" rx="0.6" fill="#5a8ad0"/><circle cx="9" cy="8" r="3.8" fill="#a9a9a9"/><path d="M9 5.5V8.2H11" fill="none" stroke="#555" stroke-width="0.8"/><path d="M3.4 8.6C4 5 7.6 3.6 10.6 5" fill="none" stroke="#1f6b2a" stroke-width="1.6"/><path d="M2 7.6L3.6 10.2L5.6 8Z" fill="#1f6b2a"/><rect x="0" y="9.2" width="8" height="7.8" fill="#fbfbfb"/><path d="M2.2 15L5.6 11.6M3.4 11.2H6V13.8" fill="none" stroke="#1a7ef0" stroke-width="1.6"/></svg><div class="n">History</div><div class="d">7/26/2023 23:36</div><div class="y">File folder</div></div>
<div class="row" style="top:582px"><svg width="16" height="13" viewBox="0 0 16 13" style=""><defs><linearGradient id="fg25" x1="0" y1="0" x2="1" y2="1"><stop offset="0" stop-color="#ffe99e"/><stop offset="1" stop-color="#f8c93a"/></linearGradient></defs><path d="M1.1 0h5.6l1.7 2h6.5a1.1 1.1 0 0 1 1.1 1.1V6H0V1.1A1.1 1.1 0 0 1 1.1 0z" fill="#efb000"/><path d="M0 4h16v7.8a1.2 1.2 0 0 1-1.2 1.2H1.2A1.2 1.2 0 0 1 0 11.8z" fill="url(#fg25)"/><path d="M0.4 12.2h15.2" stroke="#f1b41a" stroke-width="0.9"/></svg><div class="n">HP</div><div class="d">11/6/2023 17:39</div><div class="y">File folder</div></div>
<div class="row" style="top:603px"><svg width="16" height="13" viewBox="0 0 16 13" style=""><defs><linearGradient id="fg26" x1="0" y1="0" x2="1" y2="1"><stop offset="0" stop-color="#ffe99e"/><stop offset="1" stop-color="#f8c93a"/></linearGradient></defs><path d="M1.1 0h5.6l1.7 2h6.5a1.1 1.1 0 0 1 1.1 1.1V6H0V1.1A1.1 1.1 0 0 1 1.1 0z" fill="#efb000"/><path d="M0 4h16v7.8a1.2 1.2 0 0 1-1.2 1.2H1.2A1.2 1.2 0 0 1 0 11.8z" fill="url(#fg26)"/><path d="M0.4 12.2h15.2" stroke="#f1b41a" stroke-width="0.9"/></svg><div class="n">IdentityNexusIntegration</div><div class="d">9/25/2023 13:33</div><div class="y">File folder</div></div>
<div class="row" style="top:624px"><svg width="16" height="13" viewBox="0 0 16 13" style=""><defs><linearGradient id="fg27" x1="0" y1="0" x2="1" y2="1"><stop offset="0" stop-color="#ffe99e"/><stop offset="1" stop-color="#f8c93a"/></linearGradient></defs><path d="M1.1 0h5.6l1.7 2h6.5a1.1 1.1 0 0 1 1.1 1.1V6H0V1.1A1.1 1.1 0 0 1 1.1 0z" fill="#efb000"/><path d="M0 4h16v7.8a1.2 1.2 0 0 1-1.2 1.2H1.2A1.2 1.2 0 0 1 0 11.8z" fill="url(#fg27)"/><path d="M0.4 12.2h15.2" stroke="#f1b41a" stroke-width="0.9"/></svg><div class="n">IsolatedStorage</div><div class="d">10/2/2023 11:43</div><div class="y">File folder</div></div>
<div class="row" style="top:645px"><svg width="16" height="13" viewBox="0 0 16 13" style=""><defs><linearGradient id="fg28" x1="0" y1="0" x2="1" y2="1"><stop offset="0" stop-color="#ffe99e"/><stop offset="1" stop-color="#f8c93a"/></linearGradient></defs><path d="M1.1 0h5.6l1.7 2h6.5a1.1 1.1 0 0 1 1.1 1.1V6H0V1.1A1.1 1.1 0 0 1 1.1 0z" fill="#efb000"/><path d="M0 4h16v7.8a1.2 1.2 0 0 1-1.2 1.2H1.2A1.2 1.2 0 0 1 0 11.8z" fill="url(#fg28)"/><path d="M0.4 12.2h15.2" stroke="#f1b41a" stroke-width="0.9"/></svg><div class="n">Microsoft</div><div class="d">10/23/2023 19:00</div><div class="y">File folder</div></div>
<div class="row" style="top:666px"><svg width="16" height="13" viewBox="0 0 16 13" style=""><defs><linearGradient id="fg29" x1="0" y1="0" x2="1" y2="1"><stop offset="0" stop-color="#ffe99e"/><stop offset="1" stop-color="#f8c93a"/></linearGradient></defs><path d="M1.1 0h5.6l1.7 2h6.5a1.1 1.1 0 0 1 1.1 1.1V6H0V1.1A1.1 1.1 0 0 1 1.1 0z" fill="#efb000"/><path d="M0 4h16v7.8a1.2 1.2 0 0 1-1.2 1.2H1.2A1.2 1.2 0 0 1 0 11.8z" fill="url(#fg29)"/><path d="M0.4 12.2h15.2" stroke="#f1b41a" stroke-width="0.9"/></svg><div class="n">Microsoft SDKs</div><div class="d">9/25/2023 13:32</div><div class="y">File folder</div></div>
<div class="row" style="top:687px"><svg width="16" height="13" viewBox="0 0 16 13" style=""><defs><linearGradient id="fg30" x1="0" y1="0" x2="1" y2="1"><stop offset="0" stop-color="#ffe99e"/><stop offset="1" stop-color="#f8c93a"/></linearGradient></defs><path d="M1.1 0h5.6l1.7 2h6.5a1.1 1.1 0 0 1 1.1 1.1V6H0V1.1A1.1 1.1 0 0 1 1.1 0z" fill="#efb000"/><path d="M0 4h16v7.8a1.2 1.2 0 0 1-1.2 1.2H1.2A1.2 1.2 0 0 1 0 11.8z" fill="url(#fg30)"/><path d="M0.4 12.2h15.2" stroke="#f1b41a" stroke-width="0.9"/></svg><div class="n">Mobisystems</div><div class="d">8/10/2023 08:42</div><div class="y">File folder</div></div>
<div class="row" style="top:708px"><svg width="16" height="13" viewBox="0 0 16 13" style=""><defs><linearGradient id="fg31" x1="0" y1="0" x2="1" y2="1"><stop offset="0" stop-color="#ffe99e"/><stop offset="1" stop-color="#f8c93a"/></linearGradient></defs><path d="M1.1 0h5.6l1.7 2h6.5a1.1 1.1 0 0 1 1.1 1.1V6H0V1.1A1.1 1.1 0 0 1 1.1 0z" fill="#efb000"/><path d="M0 4h16v7.8a1.2 1.2 0 0 1-1.2 1.2H1.2A1.2 1.2 0 0 1 0 11.8z" fill="url(#fg31)"/><path d="M0.4 12.2h15.2" stroke="#f1b41a" stroke-width="0.9"/></svg><div class="n">Movavi</div><div class="d">11/1/2023 19:41</div><div class="y">File folder</div></div>
<div class="row" style="top:729px"><svg width="16" height="13" viewBox="0 0 16 13" style=""><defs><linearGradient id="fg32" x1="0" y1="0" x2="1" y2="1"><stop offset="0" stop-color="#ffe99e"/><stop offset="1" stop-color="#f8c93a"/></linearGradient></defs><path d="M1.1 0h5.6l1.7 2h6.5a1.1 1.1 0 0 1 1.1 1.1V6H0V1.1A1.1 1.1 0 0 1 1.1 0z" fill="#efb000"/><path d="M0 4h16v7.8a1.2 1.2 0 0 1-1.2 1.2H1.2A1.2 1.2 0 0 1 0 11.8z" fill="url(#fg32)"/><path d="M0.4 12.2h15.2" stroke="#f1b41a" stroke-width="0.9"/></svg><div class="n">NordVPN</div><div class="d">11/15/2023 01:12</div><div class="y">File folder</div></div>
<div class="row" style="top:750px"><svg width="16" height="13" viewBox="0 0 16 13" style=""><defs><linearGradient id="fg33" x1="0" y1="0" x2="1" y2="1"><stop offset="0" stop-color="#ffe99e"/><stop offset="1" stop-color="#f8c93a"/></linearGradient></defs><path d="M1.1 0h5.6l1.7 2h6.5a1.1 1.1 0 0 1 1.1 1.1V6H0V1.1A1.1 1.1 0 0 1 1.1 0z" fill="#efb000"/><path d="M0 4h16v7.8a1.2 1.2 0 0 1-1.2 1.2H1.2A1.2 1.2 0 0 1 0 11.8z" fill="url(#fg33)"/><path d="M0.4 12.2h15.2" stroke="#f1b41a" stroke-width="0.9"/></svg><div class="n">NuGet</div><div class="d">9/25/2023 14:17</div><div class="y">File folder</div></div>
<div class="row" style="top:771px"><svg width="16" height="13" viewBox="0 0 16 13" style=""><defs><linearGradient id="fg34" x1="0" y1="0" x2="1" y2="1"><stop offset="0" stop-color="#ffe99e"/><stop offset="1" stop-color="#f8c93a"/></linearGradient></defs><path d="M1.1 0h5.6l1.7 2h6.5a1.1 1.1 0 0 1 1.1 1.1V6H0V1.1A1.1 1.1 0 0 1 1.1 0z" fill="#efb000"/><path d="M0 4h16v7.8a1.2 1.2 0 0 1-1.2 1.2H1.2A1.2 1.2 0 0 1 0 11.8z" fill="url(#fg34)"/><path d="M0.4 12.2h15.2" stroke="#f1b41a" stroke-width="0.9"/></svg><div class="n">NVIDIA Corporation</div><div class="d">9/11/2023 22:22</div><div class="y">File folder</div></div>
</div></div>
<div class="a" style="left:312px;top:143px;width:740px;height:25px;background:#1b1b1b"></div>
<div class="t" style="left:329px;top:149px">Name</div>
<div class="t" style="left:590px;top:149px">Date modified</div>
<div class="t" style="left:734px;top:149px">Type</div>
<div class="t" style="left:854px;top:149px">Size</div>
<div class="a" style="left:583px;top:143px;width:1px;height:25px;background:#5a5a5a"></div>
<div class="a" style="left:727px;top:143px;width:1px;height:25px;background:#5a5a5a"></div>
<div class="a" style="left:847px;top:143px;width:1px;height:25px;background:#5a5a5a"></div>
<div class="a" style="left:927px;top:143px;width:1px;height:25px;background:#5a5a5a"></div>
<svg width="9" height="5" style="left:449px;top:144px"><path d="M0.5 4.5L4.5 0.7L8.5 4.5" fill="none" stroke="#9a9a9a" stroke-width="1"/></svg>
<div class="a" style="left:1056px;top:234px;width:2px;height:262px;background:#9d9d9d;border-radius:1px"></div>
<div class="a" style="left:0;top:791px;width:1066px;height:25px;background:#1c1c1c"></div>
<div class="t" style="left:15px;top:797px">69 items</div>
<div class="a" style="left:69px;top:797px;width:1px;height:12px;background:#fff"></div>
<div class="t" style="left:80px;top:797px">1 item selected</div>
<div class="a" style="left:169px;top:797px;width:1px;height:12px;background:#fff"></div>
<div class="a" style="left:1017px;top:792px;width:22px;height:22px;background:#777"></div>
<div class="a" style="left:1021px;top:796px;width:16px;height:15px;background:#d6d6d6;border-radius:2px"></div>
<svg width="12" height="10" style="left:1023px;top:799px"><path d="M0 0.5H12M0 3.5H12M0 6.5H12M0 9.5H12" stroke="#111" stroke-width="1"/></svg>
<div class="a" style="left:1042px;top:795px;width:16px;height:16px;background:#bdbdbd;border-radius:2px"></div>
<div class="a" style="left:1044px;top:797px;width:12px;height:10px;background:#fff;border:1.5px solid #111;border-radius:1px"></div>
<div class="a" style="left:1044px;top:808px;width:12px;height:1.2px;background:#111"></div>
<svg width="1066" height="816" style="left:0;top:0"><path d="M394.2 134.2L437.5 172.5" stroke="#ef3b82" stroke-width="4.1"/><path d="M380.3 122.0L392.8 143.4L394.9 134.9L403.1 131.7Z" fill="#ef3b82"/><path d="M409.9 400.4L457.5 392.5" stroke="#ef3b82" stroke-width="4.1"/><path d="M391.7 403.5L416.2 407.3L410.9 400.3L413.6 391.9Z" fill="#ef3b82"/><circle cx="457.5" cy="392.7" r="18.2" fill="#e93b3c"/><circle cx="437.5" cy="172.5" r="18.2" fill="#e93b3c"/></svg>
<svg width="1066" height="816" style="left:0;top:0"><path d="M456.5 384.3H459.9V401.1H456.5V388.4L452.3 390.9V387.3Z" fill="#fff"/></svg>
<div class="t" style="left:425px;top:160px;width:24px;text-align:center;font-size:24px;-webkit-text-stroke:0.7px #fff;line-height:26px;height:26px">2</div>
</div></div>
<div style="position:absolute;left:0;top:87px;width:1px;height:6px;background:#9cc47c"></div><div style="position:absolute;left:0;top:102px;width:1px;height:5px;background:#c23a3a"></div><div style="position:absolute;left:0;top:107px;width:1px;height:2px;background:#e0902a"></div><div style="position:absolute;left:0;top:128px;width:1px;height:3px;background:#2a78d0"></div>
</body></html>
